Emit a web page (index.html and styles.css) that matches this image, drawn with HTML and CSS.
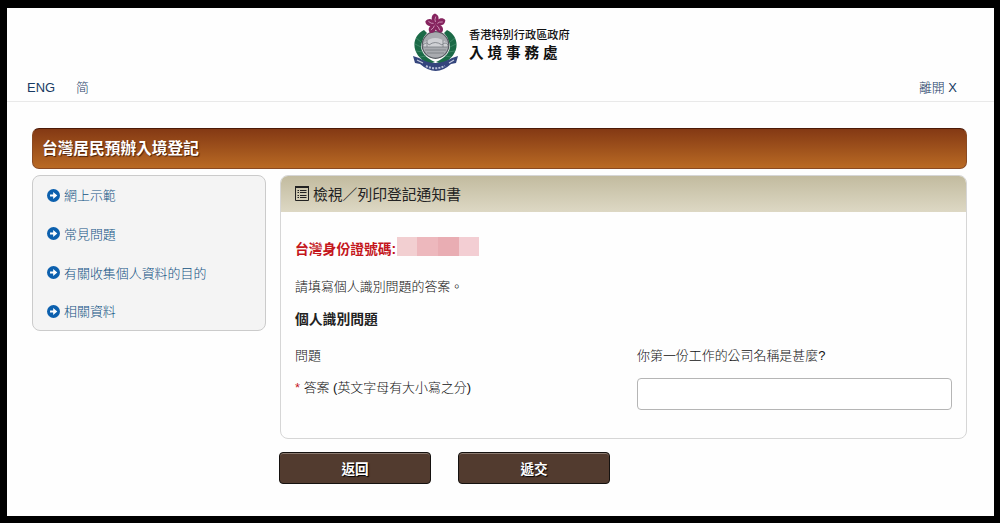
FILE: index.html
```
<!DOCTYPE html>
<html lang="zh-Hant">

    <head>
        <meta charset="utf-8">
        <meta name="viewport" content="width=device-width, initial-scale=1">
        <title>台灣居民預辦入境登記</title>

        <link rel="stylesheet" href="styles.css">
    </head>

    <body>

        <svg class="symbols" width="0" height="0">
            <symbol id="arrow" viewBox="0 0 12 12">
                <circle cx="6" cy="6" r="6" fill="#0c60ae" />
                <path d="M2.8 5H5.7V2.8L9.5 6L5.7 9.2V7H2.8Z" fill="#fff" />
            </symbol>
            <g id="petal">
                <path d="M0 0C-5 -3 -5 -9 -.5 -10.5C4.5 -8.5 4 -3.5 0 0Z" fill="#86245f" />
                <path d="M0 -2Q-1.2 -4 .3 -7.5" stroke="#e3b5d3" stroke-width=".7" fill="none" />
            </g>
        </svg>

        <header>
            <div class="brand">
                <!-- crest: flower, laurels, harbour disc, ribbon -->
                <svg class="crest" viewBox="0 0 48 60">
                    <path d="M12 17C-2 24 -1 43 17 51L23 49C12 44 7 37 10 29Q11 24 15 20Z" fill="#1b6a47" />
                    <path d="M35 17C49 24 48 43 30 51L24 49C35 44 40 37 37 29Q36 24 32 20Z" fill="#1b6a47" />
                    <path d="M4 25L9 29M3 31L9 34M4 38L11 39M8 44L14 43M43 25L38 29M44 31L38 34M43 38L36 39M39 44L33 43" stroke="#4e9273" stroke-width=".7" />
                    <circle cx="23.5" cy="32" r="13.3" fill="#a9abb0" stroke="#555960" stroke-width="1.2" />
                    <path d="M12 30Q23 20 35 30V34H12Z" fill="#cfd0d4" />
                    <path d="M11 34H36M13 37H34M15 40H32M15 27V34M31 27V34M11 32Q15 28 17 32Q23 27 30 32Q33 28 36 32" stroke="#777b82" stroke-width=".8" fill="none" />
                    <g transform="translate(23.5 11)">
                        <use href="#petal" />
                        <use href="#petal" transform="rotate(72)" />
                        <use href="#petal" transform="rotate(144)" />
                        <use href="#petal" transform="rotate(216)" />
                        <use href="#petal" transform="rotate(288)" />
                    </g>
                    <path d="M1 43L7 45Q23 55 40 45L46 43L44 50L39 51Q24 65 8 51L3 50Z" fill="#34457c" />
                    <path d="M5 47L11 50M37 50L42 47" stroke="#c3c9dd" stroke-width="1.2" />
                    <path d="M14 53Q23 57.5 33 53" stroke="#b9c1da" stroke-width="2" stroke-dasharray="2 1.2" fill="none" />
                </svg>
                <div class="brand_text">
                    <span class="brand_gov">香港特別行政區政府</span>
                    <span class="brand_dept">入境事務處</span>
                </div>
            </div>
            <nav>
                <a class="lang">ENG</a>
                <a class="lang">简</a>
                <a class="leave">離開 X</a>
            </nav>
        </header>

        <main>

            <h1>台灣居民預辦入境登記</h1>

            <div class="columns">

                <ul class="sidebar">
                    <li><svg><use href="#arrow" /></svg><a>網上示範</a></li>
                    <li><svg><use href="#arrow" /></svg><a>常見問題</a></li>
                    <li><svg><use href="#arrow" /></svg><a>有關收集個人資料的目的</a></li>
                    <li><svg><use href="#arrow" /></svg><a>相關資料</a></li>
                </ul>

                <form>
                    <section class="panel">
                        <h2>
                            <svg viewBox="0 0 14 15">
                                <path d="M.5 .5H13.5V14.5H.5Z" fill="none" stroke="#222" />
                                <path d="M0 0H14V2H0ZM2.5 4H4V5H2.5ZM5 4H11.5V5H5ZM2.5 6H4V7H2.5ZM5 6H11.5V7H5ZM2.5 9H4V10H2.5ZM5 9H11.5V10H5ZM2.5 11H4V12H2.5ZM5 11H11.5V12H5Z" fill="#222" />
                            </svg>
                            檢視／列印登記通知書
                        </h2>
                        <div class="panel_body">
                            <div class="idno"><span>台灣身份證號碼:</span><span class="mask"></span></div>
                            <p class="hint">請填寫個人識別問題的答案。</p>
                            <h3>個人識別問題</h3>
                            <div class="row row_q">
                                <span>問題</span>
                                <span>你第一份工作的公司名稱是甚麼?</span>
                            </div>
                            <div class="row">
                                <label for="answer"><b>*</b> 答案 (英文字母有大小寫之分)</label>
                                <input id="answer" type="text">
                            </div>
                        </div>
                    </section>
                    <div class="buttons">
                        <button type="button">返回</button>
                        <button type="button">遞交</button>
                    </div>
                </form>

            </div>

        </main>

    </body>

</html>
```

FILE: styles.css
```
* {
    box-sizing: border-box;
}

body {
    margin: 0;
    height: 523px;
    overflow: hidden;
    border: 7px solid #000;
    border-top-width: 8px;
    border-right-width: 6px;
    background: #fefefe;
    color: #111;
    font: 300 12.95px/20px "Liberation Sans", "Noto Sans CJK TC", sans-serif;
}

h1, h2, h3, p, ul {
    margin: 0;
    padding: 0;
}

.symbols {
    display: block;
}

header {
    height: 94px;
    border-bottom: 1px solid #e9e9e9;
}

.brand {
    display: flex;
    height: 70px;
    padding: 5px 0 0 405px;
}

.crest {
    width: 48px;
    height: 60px;
}

.brand_text {
    display: flex;
    flex-direction: column;
    gap: 1px;
    padding: 14px 0 0 9px;
    color: #111;
    font-family: "Noto Sans CJK TC", sans-serif;
}

.brand_gov {
    font-size: 11.2px;
    font-weight: 500;
    line-height: 15px;
}

.brand_dept {
    font-size: 14.6px;
    font-weight: 700;
    line-height: 18px;
    letter-spacing: 3.9px;
}

nav {
    display: flex;
    gap: 21px;
    padding: 0 37px 0 20px;
    color: #173a63;
}

.leave {
    margin-left: auto;
}

main {
    padding: 26px 27px 0 25px;
}

h1 {
    height: 41px;
    padding-left: 9px;
    border: 1px solid #8a4a22;
    border-top-color: #4c1a08;
    border-radius: 7px;
    background: linear-gradient(#843914, #b96a24);
    color: #fff;
    font-size: 15.7px;
    line-height: 40px;
    text-shadow: 1px 1px 1px #4a2008;
}

.columns {
    display: flex;
    gap: 14px;
    align-items: flex-start;
    padding-top: 6px;
}

.sidebar {
    width: 234px;
    height: 156px;
    padding: 10px 14px;
    border: 1px solid #cbcbcb;
    border-radius: 8px;
    background: #f4f4f4;
    list-style: none;
    color: #0f5283;
}

.sidebar li {
    display: flex;
    align-items: center;
    gap: 4px;
    height: 20px;
    margin-bottom: 18.8px;
}

.sidebar svg {
    width: 13px;
    height: 13px;
    margin-top: -2px;
}

form {
    flex: 1;
    margin-left: -1px;
}

.panel {
    height: 264px;
    margin-left: 1px;
    overflow: hidden;
    border: 1px solid #d6d6d6;
    border-radius: 8px;
}

h2 {
    display: flex;
    align-items: center;
    gap: 4px;
    height: 36px;
    padding: 1px 0 0 14px;
    background: linear-gradient(#c2bb9f, #ddd8c4);
    color: #222;
    font-size: 14.8px;
    font-weight: 400;
}

h2 svg {
    width: 14px;
    height: 15px;
    margin-top: -2px;
}

.panel_body {
    padding: 25px 14px 0;
}

.idno {
    display: flex;
    height: 22px;
    color: #c4161c;
    font-size: 13.8px;
    font-weight: 700;
    line-height: 26px;
}

/* hidden number, four blurred-out blocks */
.mask {
    width: 82px;
    height: 19px;
    margin-left: 1px;
    background: linear-gradient(90deg, #f2cfd1 25%, #edb8bd 25% 50%, #e9adb3 50% 75%, #f3ced3 75%);
}

.hint {
    margin-top: 18px;
}

h3 {
    margin-top: 13px;
    color: #222;
    font-size: 13.8px;
}

.row {
    display: grid;
    grid-template-columns: 342px 315px;
}

.row_q {
    margin: 16px 0 12px;
}

.row b {
    color: #c4161c;
    font-weight: 400;
}

input {
    height: 32px;
    border: 1px solid #b5b5b5;
    border-radius: 4px;
    background: #fff;
}

.buttons {
    display: flex;
    gap: 27px;
    padding-top: 13px;
}

button {
    width: 152px;
    height: 32px;
    padding: 0;
    border: 1px solid #151210;
    border-radius: 4px;
    background: #523b2f;
    box-shadow: inset 0 1px 0 #8b7a70;
    color: #fff;
    font: 700 13.6px "Liberation Sans", "Noto Sans CJK TC", sans-serif;
    text-shadow: 1px 1px 1px #000;
}
```
